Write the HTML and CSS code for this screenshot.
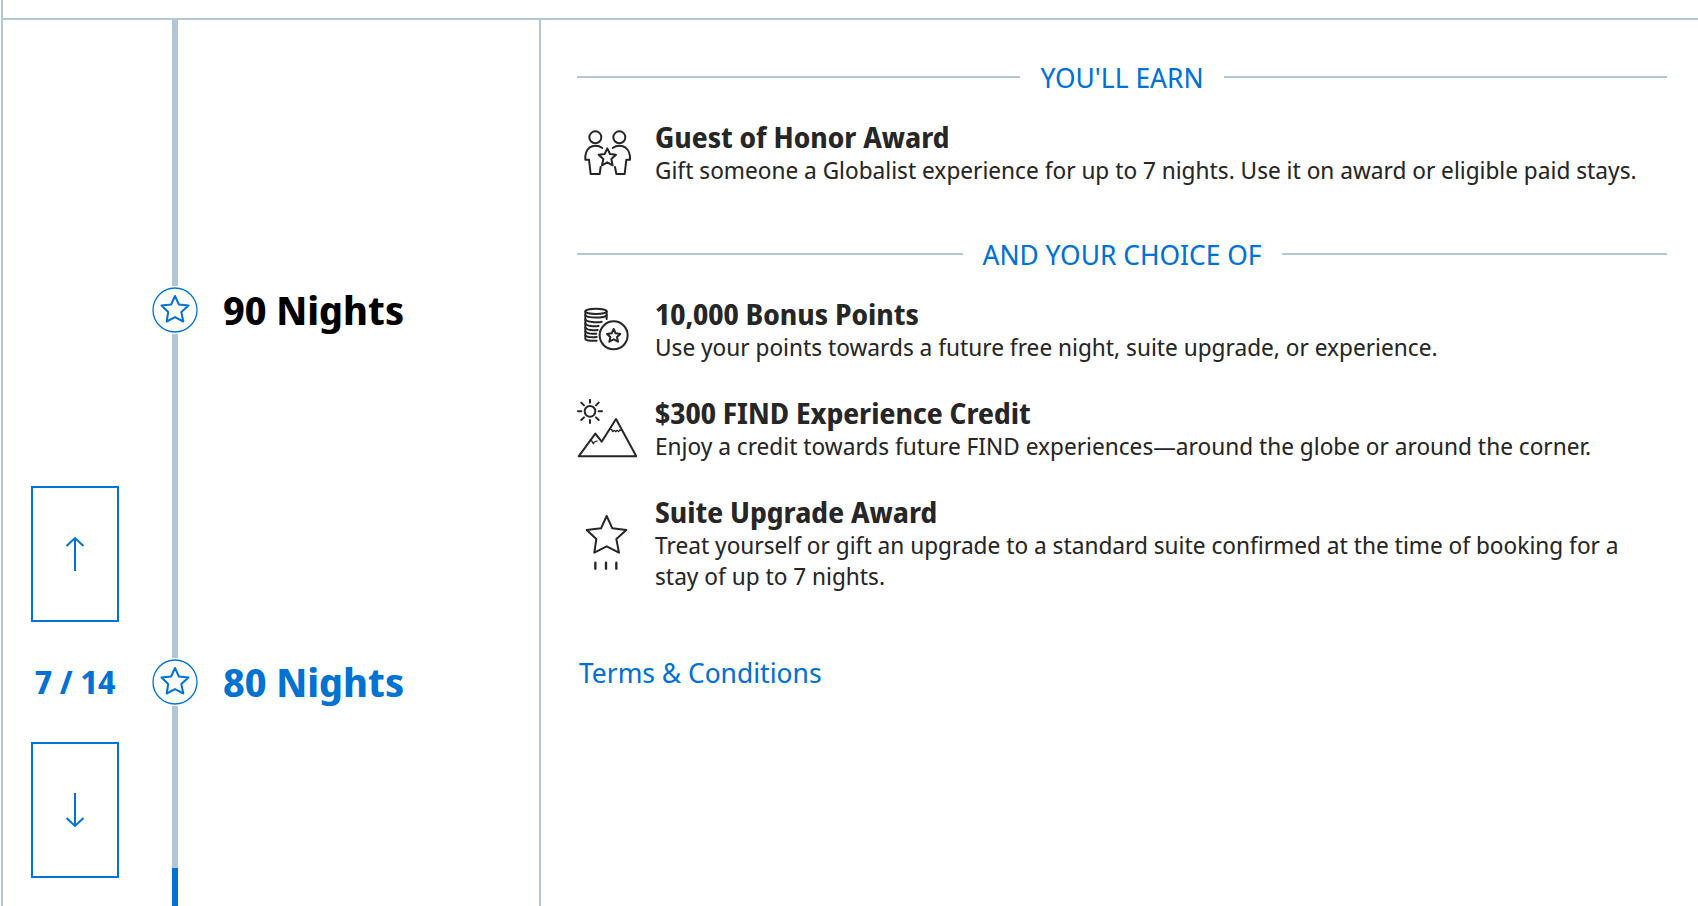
FILE: index.html
```html
<!DOCTYPE html>
<html lang="en">
<head>
<meta charset="utf-8">
<title>Milestone Rewards</title>
<link rel="stylesheet" href="styles.css">
</head>
<body>
<main class="card">
  <div class="tracker">
    <nav class="pager" aria-label="Milestones">
      <button class="pager-button" type="button" aria-label="Previous milestone">
        <svg class="arrow" viewBox="0 0 20 36" aria-hidden="true"><path d="M10 35V2M1.500 10 10 2l8.500 8"/></svg>
      </button>
      <p class="pager-count">7 / 14</p>
      <button class="pager-button" type="button" aria-label="Next milestone">
        <svg class="arrow" viewBox="0 0 20 36" aria-hidden="true"><path d="M10 1v33M1.500 26 10 34l8.500-8"/></svg>
      </button>
    </nav>
    <ol class="milestones">
      <li class="milestone">
        <span class="rail"></span>
        <svg class="node" viewBox="0 0 48 48" aria-hidden="true"><circle cx="24" cy="24" r="22"/><path class="node-star" d="M24 10l3.900 8.500 9.600 1-7.200 6.500 2 9.500-8.300-4.400-8.300 4.400 1.500-9.500-6.700-6.500 9.600-1z"/></svg>
        <h2 class="milestone-name">90 Nights</h2>
      </li>
      <li class="milestone milestone-current">
        <span class="rail"></span>
        <svg class="node" viewBox="0 0 48 48" aria-hidden="true"><circle cx="24" cy="24" r="22"/><path class="node-star" d="M24 10l3.900 8.500 9.600 1-7.200 6.500 2 9.500-8.300-4.400-8.300 4.400 1.500-9.500-6.700-6.500 9.600-1z"/></svg>
        <h2 class="milestone-name">80 Nights</h2>
      </li>
      <li class="rail-end">
        <span class="rail rail-last"></span>
        <span class="rail rail-done"></span>
      </li>
    </ol>
  </div>

  <section class="rewards">
    <h3 class="divider">YOU'LL EARN</h3>
    <ul class="reward-list">
      <li class="reward">
        <svg class="icon" viewBox="51 39 180 180" aria-hidden="true">
          <circle cx="106" cy="82" r="18"/><circle cx="178" cy="82" r="18"/>
          <path d="M127 114C115 105 98 106 88 113 78 121 75 133 76 149h11l5 43h27l3-21"/>
          <path d="M158 114c12-9 29-8 39-1 10 8 14 20 13 36h-11l-5 43h-25l-4-21"/>
          <path d="M142 115l8 17 18 2-14 13 4 19-16-9-16 9 4-19-14-13 18-2z"/>
        </svg>
        <div class="reward-text">
          <h4 class="reward-title">Guest of Honor Award</h4>
          <p class="reward-detail">Gift someone a Globalist experience for up to 7 nights. Use it on award or eligible paid stays.</p>
        </div>
      </li>
    </ul>

    <h3 class="divider">AND YOUR CHOICE OF</h3>
    <ul class="reward-list">
      <li class="reward">
        <svg class="icon" viewBox="51 33 180 180" aria-hidden="true">
          <ellipse cx="108" cy="67" rx="32" ry="8"/>
          <path d="M76 67v83c0 4 14 6 34 5M140 67v23"/>
          <path d="M76 79c5 9 58 9 64 0M76 91c4 9 36 10 49 7M76 103c4 9 27 10 40 8M76 115c4 9 25 9 37 8M76 127c4 7 22 8 33 7M76 139c4 5 22 6 34 5"/>
          <circle cx="161" cy="139" r="42"/>
          <path d="M161 120l6 13 14 2-10 9 3 14-13-7-13 7 3-14-10-9 14-2z"/>
        </svg>
        <div class="reward-text">
          <h4 class="reward-title">10,000 Bonus Points</h4>
          <p class="reward-detail">Use your points towards a future free night, suite upgrade, or experience.</p>
        </div>
      </li>
      <li class="reward">
        <svg class="icon" viewBox="51 30 180 180" aria-hidden="true">
          <circle cx="90" cy="67" r="16"/>
          <path d="M90 32v9M90 93v9M54 67h10M116 67h10M64 41l8 8M108 85l8 8M116 41l-8 8M72 85l-8 8"/>
          <path d="M56 202l50-68 19 24 43-68 61 112z"/>
          <path class="fine" d="M91 153l5 4 4 7 3-5 8-3M151 119l4 3 3 6 5-4 4 4 4-4 5 4 3-5 4 1"/>
        </svg>
        <div class="reward-text">
          <h4 class="reward-title">$300 FIND Experience Credit</h4>
          <p class="reward-detail">Enjoy a credit towards future FIND experiences—around the globe or around the corner.</p>
        </div>
      </li>
      <li class="reward">
        <svg class="icon" viewBox="51 75 180 180" aria-hidden="true">
          <path d="M140 84l17 37 42 5-30 27 8 41-37-19-37 19 6-41-29-27 43-5z"/>
          <path class="heavy" d="M106 224v18M138 224v18M169 224v18"/>
        </svg>
        <div class="reward-text">
          <h4 class="reward-title">Suite Upgrade Award</h4>
          <p class="reward-detail">Treat yourself or gift an upgrade to a standard suite confirmed at the time of booking for a stay of up to 7 nights.</p>
        </div>
      </li>
    </ul>
    <a class="terms" href="#terms">Terms &amp; Conditions</a>
  </section>
</main>
</body>
</html>
```
FILE: styles.css
```css
* {
  box-sizing: border-box;
}

body {
  margin: 0;
  min-height: 100vh;
  display: flex;
  padding-left: 1px;
  background: #fff;
  color: #262626;
  font-family: "Noto Sans Display", "Noto Sans", sans-serif;
}

h2, h3, h4, p, ul, ol {
  margin: 0;
  padding: 0;
}

ul, ol {
  list-style: none;
}

.card {
  flex: 1;
  display: flex;
  padding-top: 18px;
  border-left: 2px solid #b2c6d8;
}

.tracker {
  flex: none;
  width: 538px;
  display: flex;
  border-top: 2px solid #b2c6d8;
  border-right: 2px solid #b2c6d8;
}

.pager {
  width: 116px;
  padding: 466px 0 28px 28px;
}

.pager-button {
  display: flex;
  align-items: center;
  justify-content: center;
  width: 88px;
  height: 136px;
  padding: 0;
  border: 2px solid #0072d2;
  background: #fff;
  cursor: pointer;
}

.arrow {
  width: 20px;
  height: 36px;
  fill: none;
  stroke: #0072d2;
  stroke-width: 2;
}

.pager-count {
  padding: 38px 0;
  color: #0072d2;
  font-size: 32px;
  font-weight: 700;
  line-height: 44px;
  text-align: center;
  white-space: nowrap;
}

.milestones {
  flex: 1;
  display: flex;
  flex-direction: column;
  padding-left: 32px;
}

.milestone {
  display: grid;
  grid-template-columns: 48px 1fr;
  grid-template-rows: 324px 48px;
  column-gap: 24px;
  align-items: center;
}

.milestone:first-child {
  grid-template-rows: 266px 48px;
}

.rail {
  justify-self: center;
  width: 6px;
  height: 100%;
  background: #b2c6d8;
}

.node {
  grid-row: 2;
  width: 48px;
  height: 48px;
  fill: none;
  stroke: #0072d2;
  stroke-width: 1.3;
}

.node-star {
  stroke-width: 2;
  stroke-linejoin: round;
}

.milestone-name {
  grid-row: 2;
  color: #000;
  font-size: 40px;
  line-height: 48px;
}

.milestone-current .milestone-name {
  color: #0072d2;
}

.rail-end {
  flex: 1;
  width: 48px;
  display: flex;
  flex-direction: column;
  align-items: center;
}

.rail-last {
  height: 162px;
}

.rail-done {
  flex: 1;
  background: #0072d2;
}

.rewards {
  flex: 1;
  padding: 37px 31px 40px 36px;
  border-top: 2px solid #b2c6d8;
}

.divider {
  display: flex;
  align-items: center;
  gap: 20px;
  color: #0072d2;
  font-size: 28px;
  font-weight: 400;
  line-height: 40px;
}

.divider::before,
.divider::after {
  content: "";
  flex: 1;
  height: 2px;
  background: #b2c6d8;
}

.reward-list {
  display: flex;
  flex-direction: column;
  gap: 34px;
  padding: 23px 0 49px;
}

.reward {
  display: flex;
  align-items: center;
  gap: 18px;
}

.icon {
  flex: none;
  width: 60px;
  height: 60px;
  fill: none;
  stroke: #262626;
  stroke-width: 6;
  stroke-linejoin: round;
  stroke-linecap: round;
}

.fine {
  stroke-width: 4;
}

.heavy {
  stroke-width: 7;
}

.reward-title {
  font-size: 28px;
  line-height: 34px;
}

.reward-detail {
  font-size: 24px;
  line-height: 31px;
}

.terms {
  display: inline-block;
  padding: 12px 0 0 2px;
  color: #0072d2;
  font-size: 28px;
  line-height: 40px;
  text-decoration: none;
}
```
